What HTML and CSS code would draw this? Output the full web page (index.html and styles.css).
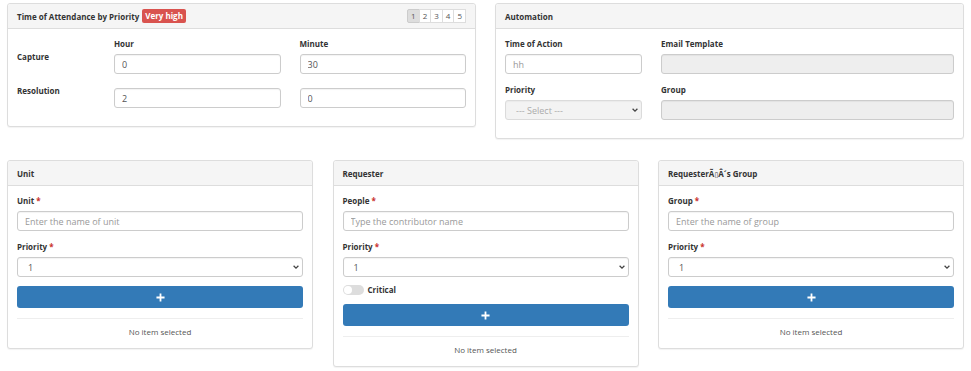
FILE: index.html
```html
<!DOCTYPE html>
<html lang="en">
<head>
    <meta charset="UTF-8">
    <meta name="viewport" content="width=device-width, initial-scale=1.0">
    <title>Priority Settings</title>
    <link rel="stylesheet" href="styles.css">
</head>
<body>
    <div class="row row-top">
        <div class="panel">
            <div class="panel-heading">
                <span class="panel-title">Time of Attendance by Priority</span>
                <span class="badge-danger">Very high</span>
                <div class="pager">
                    <span class="page active">1</span>
                    <span class="page">2</span>
                    <span class="page">3</span>
                    <span class="page">4</span>
                    <span class="page">5</span>
                </div>
            </div>
            <div class="panel-body">
                <div class="time-grid">
                    <span></span>
                    <label class="col-label">Hour</label>
                    <label class="col-label">Minute</label>

                    <label class="row-label">Capture</label>
                    <input type="text" class="form-control" value="0">
                    <input type="text" class="form-control" value="30">

                    <label class="row-label">Resolution</label>
                    <input type="text" class="form-control" value="2">
                    <input type="text" class="form-control" value="0">
                </div>
            </div>
        </div>

        <div class="panel">
            <div class="panel-heading">
                <span class="panel-title">Automation</span>
            </div>
            <div class="panel-body">
                <div class="auto-grid">
                    <div class="form-group">
                        <label>Time of Action</label>
                        <input type="text" class="form-control" placeholder="hh">
                    </div>
                    <div class="form-group">
                        <label>Email Template</label>
                        <input type="text" class="form-control" disabled>
                    </div>
                    <div class="form-group">
                        <label>Priority</label>
                        <div class="select-wrap">
                            <select class="form-control" disabled>
                                <option>--- Select ---</option>
                            </select>
                            <svg class="chevron" viewBox="0 0 10 10"><path d="M2 3.5 L5 6.5 L8 3.5" /></svg>
                        </div>
                    </div>
                    <div class="form-group">
                        <label>Group</label>
                        <input type="text" class="form-control" disabled>
                    </div>
                </div>
            </div>
        </div>
    </div>

    <div class="row row-bottom">
        <div class="panel">
            <div class="panel-heading">
                <span class="panel-title">Unit</span>
            </div>
            <div class="panel-body">
                <div class="form-group">
                    <label>Unit <span class="req">*</span></label>
                    <input type="text" class="form-control" placeholder="Enter the name of unit">
                </div>
                <div class="form-group">
                    <label>Priority <span class="req">*</span></label>
                    <div class="select-wrap">
                        <select class="form-control">
                            <option>1</option>
                        </select>
                        <svg class="chevron" viewBox="0 0 10 10"><path d="M2 3.5 L5 6.5 L8 3.5" /></svg>
                    </div>
                </div>
                <button class="btn-add" type="button"><svg viewBox="0 0 10 10"><path d="M5 0.5 V9.5 M0.5 5 H9.5" /></svg></button>
                <div class="list-empty">No item selected</div>
            </div>
        </div>

        <div class="panel">
            <div class="panel-heading">
                <span class="panel-title">Requester</span>
            </div>
            <div class="panel-body">
                <div class="form-group">
                    <label>People <span class="req">*</span></label>
                    <input type="text" class="form-control" placeholder="Type the contributor name">
                </div>
                <div class="form-group">
                    <label>Priority <span class="req">*</span></label>
                    <div class="select-wrap">
                        <select class="form-control">
                            <option>1</option>
                        </select>
                        <svg class="chevron" viewBox="0 0 10 10"><path d="M2 3.5 L5 6.5 L8 3.5" /></svg>
                    </div>
                </div>
                <label class="switch">
                    <span class="switch-track"><span class="switch-knob"></span></span>
                    Critical
                </label>
                <button class="btn-add" type="button"><svg viewBox="0 0 10 10"><path d="M5 0.5 V9.5 M0.5 5 H9.5" /></svg></button>
                <div class="list-empty">No item selected</div>
            </div>
        </div>

        <div class="panel">
            <div class="panel-heading">
                <span class="panel-title">RequesterÃ<span class="tofu">&#9647;</span>Â´s Group</span>
            </div>
            <div class="panel-body">
                <div class="form-group">
                    <label>Group <span class="req">*</span></label>
                    <input type="text" class="form-control" placeholder="Enter the name of group">
                </div>
                <div class="form-group">
                    <label>Priority <span class="req">*</span></label>
                    <div class="select-wrap">
                        <select class="form-control">
                            <option>1</option>
                        </select>
                        <svg class="chevron" viewBox="0 0 10 10"><path d="M2 3.5 L5 6.5 L8 3.5" /></svg>
                    </div>
                </div>
                <button class="btn-add" type="button"><svg viewBox="0 0 10 10"><path d="M5 0.5 V9.5 M0.5 5 H9.5" /></svg></button>
                <div class="list-empty">No item selected</div>
            </div>
        </div>
    </div>
</body>
</html>
```

FILE: styles.css
```css
body {
    margin: 0;
    padding: 3px 7px;
    font-family: "Open Sans", "Liberation Sans", sans-serif;
    font-size: 8px;
    color: #333;
    background-color: #fff;
}

.row {
    display: grid;
    align-items: start;
}

.row-top {
    grid-template-columns: 1fr 1fr;
    column-gap: 19px;
}

.row-bottom {
    grid-template-columns: 306px 306px 306px;
    justify-content: space-between;
    margin-top: 21px;
}

.panel {
    border: 1px solid #ddd;
    border-radius: 3px;
    background-color: #fff;
    box-shadow: 0 1px 1px rgba(0, 0, 0, 0.05);
}

.panel-heading {
    display: flex;
    align-items: center;
    height: 24px;
    padding: 0 9px;
    background-color: #f5f5f5;
    border-bottom: 1px solid #ddd;
    border-radius: 3px 3px 0 0;
}

.panel-title {
    font-weight: 700;
}

.tofu {
    font-family: "DejaVu Sans", sans-serif;
    font-weight: 400;
    font-size: 7px;
}

.badge-danger {
    margin-left: 3px;
    padding: 1px 3px;
    background-color: #d9534f;
    color: #fff;
    font-weight: 700;
    border-radius: 2px;
    line-height: 12px;
}

.pager {
    margin-left: auto;
    display: flex;
}

.page {
    width: 10.6px;
    height: 12px;
    line-height: 12px;
    text-align: center;
    font-size: 8px;
    color: #555;
    border: 1px solid #ddd;
    margin-left: -1px;
    background-color: #fff;
}

.page.active {
    background-color: #ddd;
    border-color: #ccc;
    border-radius: 2px 0 0 2px;
}

.panel-body {
    padding: 8px 9px 9px;
}

label {
    display: block;
    font-weight: 700;
    line-height: 14px;
}

.req {
    color: #c9302c;
}

.form-group {
    margin-bottom: 9px;
}

.form-group label {
    margin-bottom: 3px;
}

.form-control {
    display: block;
    width: 100%;
    height: 20px;
    padding: 0 7px;
    box-sizing: border-box;
    font-family: inherit;
    font-size: 9px;
    color: #555;
    background-color: #fff;
    border: 1px solid #ccc;
    border-radius: 3px;
    box-shadow: inset 0 1px 1px rgba(0, 0, 0, 0.05);
    outline: none;
}

.form-control::placeholder {
    color: #999;
}

.form-control:disabled {
    background-color: #eee;
    color: #888;
}

select.form-control {
    appearance: none;
    -webkit-appearance: none;
    padding-left: 10px;
}

.select-wrap {
    position: relative;
}

.chevron {
    position: absolute;
    right: 3px;
    top: 6px;
    width: 8px;
    height: 8px;
    fill: none;
    stroke: #444;
    stroke-width: 1.6;
}

/* time grid */
.time-grid {
    display: grid;
    grid-template-columns: 78px 1fr 1fr;
    column-gap: 19px;
    row-gap: 14px;
    padding-bottom: 9px;
}

.time-grid .col-label {
    margin-bottom: -11px;
}

.time-grid .row-label {
    margin-top: -4px;
}

.auto-grid {
    display: grid;
    grid-template-columns: 137px 1fr;
    column-gap: 19px;
}

.switch {
    display: flex;
    align-items: center;
    gap: 4px;
    margin: -3px 0 7px;
}

.switch-track {
    width: 21px;
    height: 10px;
    border-radius: 5px;
    background-color: #ddd;
    position: relative;
}

.switch-knob {
    position: absolute;
    left: 1px;
    top: 1px;
    width: 8px;
    height: 8px;
    border-radius: 50%;
    background-color: #fff;
}

.btn-add {
    display: flex;
    align-items: center;
    justify-content: center;
    width: 100%;
    height: 22px;
    margin-top: 1px;
    border: none;
    border-radius: 3px;
    background-color: #337ab7;
    cursor: pointer;
}

.btn-add svg {
    width: 9px;
    height: 9px;
    stroke: #fff;
    stroke-width: 2;
}

.list-empty {
    margin-top: 10px;
    padding-top: 6px;
    border-top: 1px solid #eee;
    text-align: center;
    color: #555;
    line-height: 14px;
}
```
